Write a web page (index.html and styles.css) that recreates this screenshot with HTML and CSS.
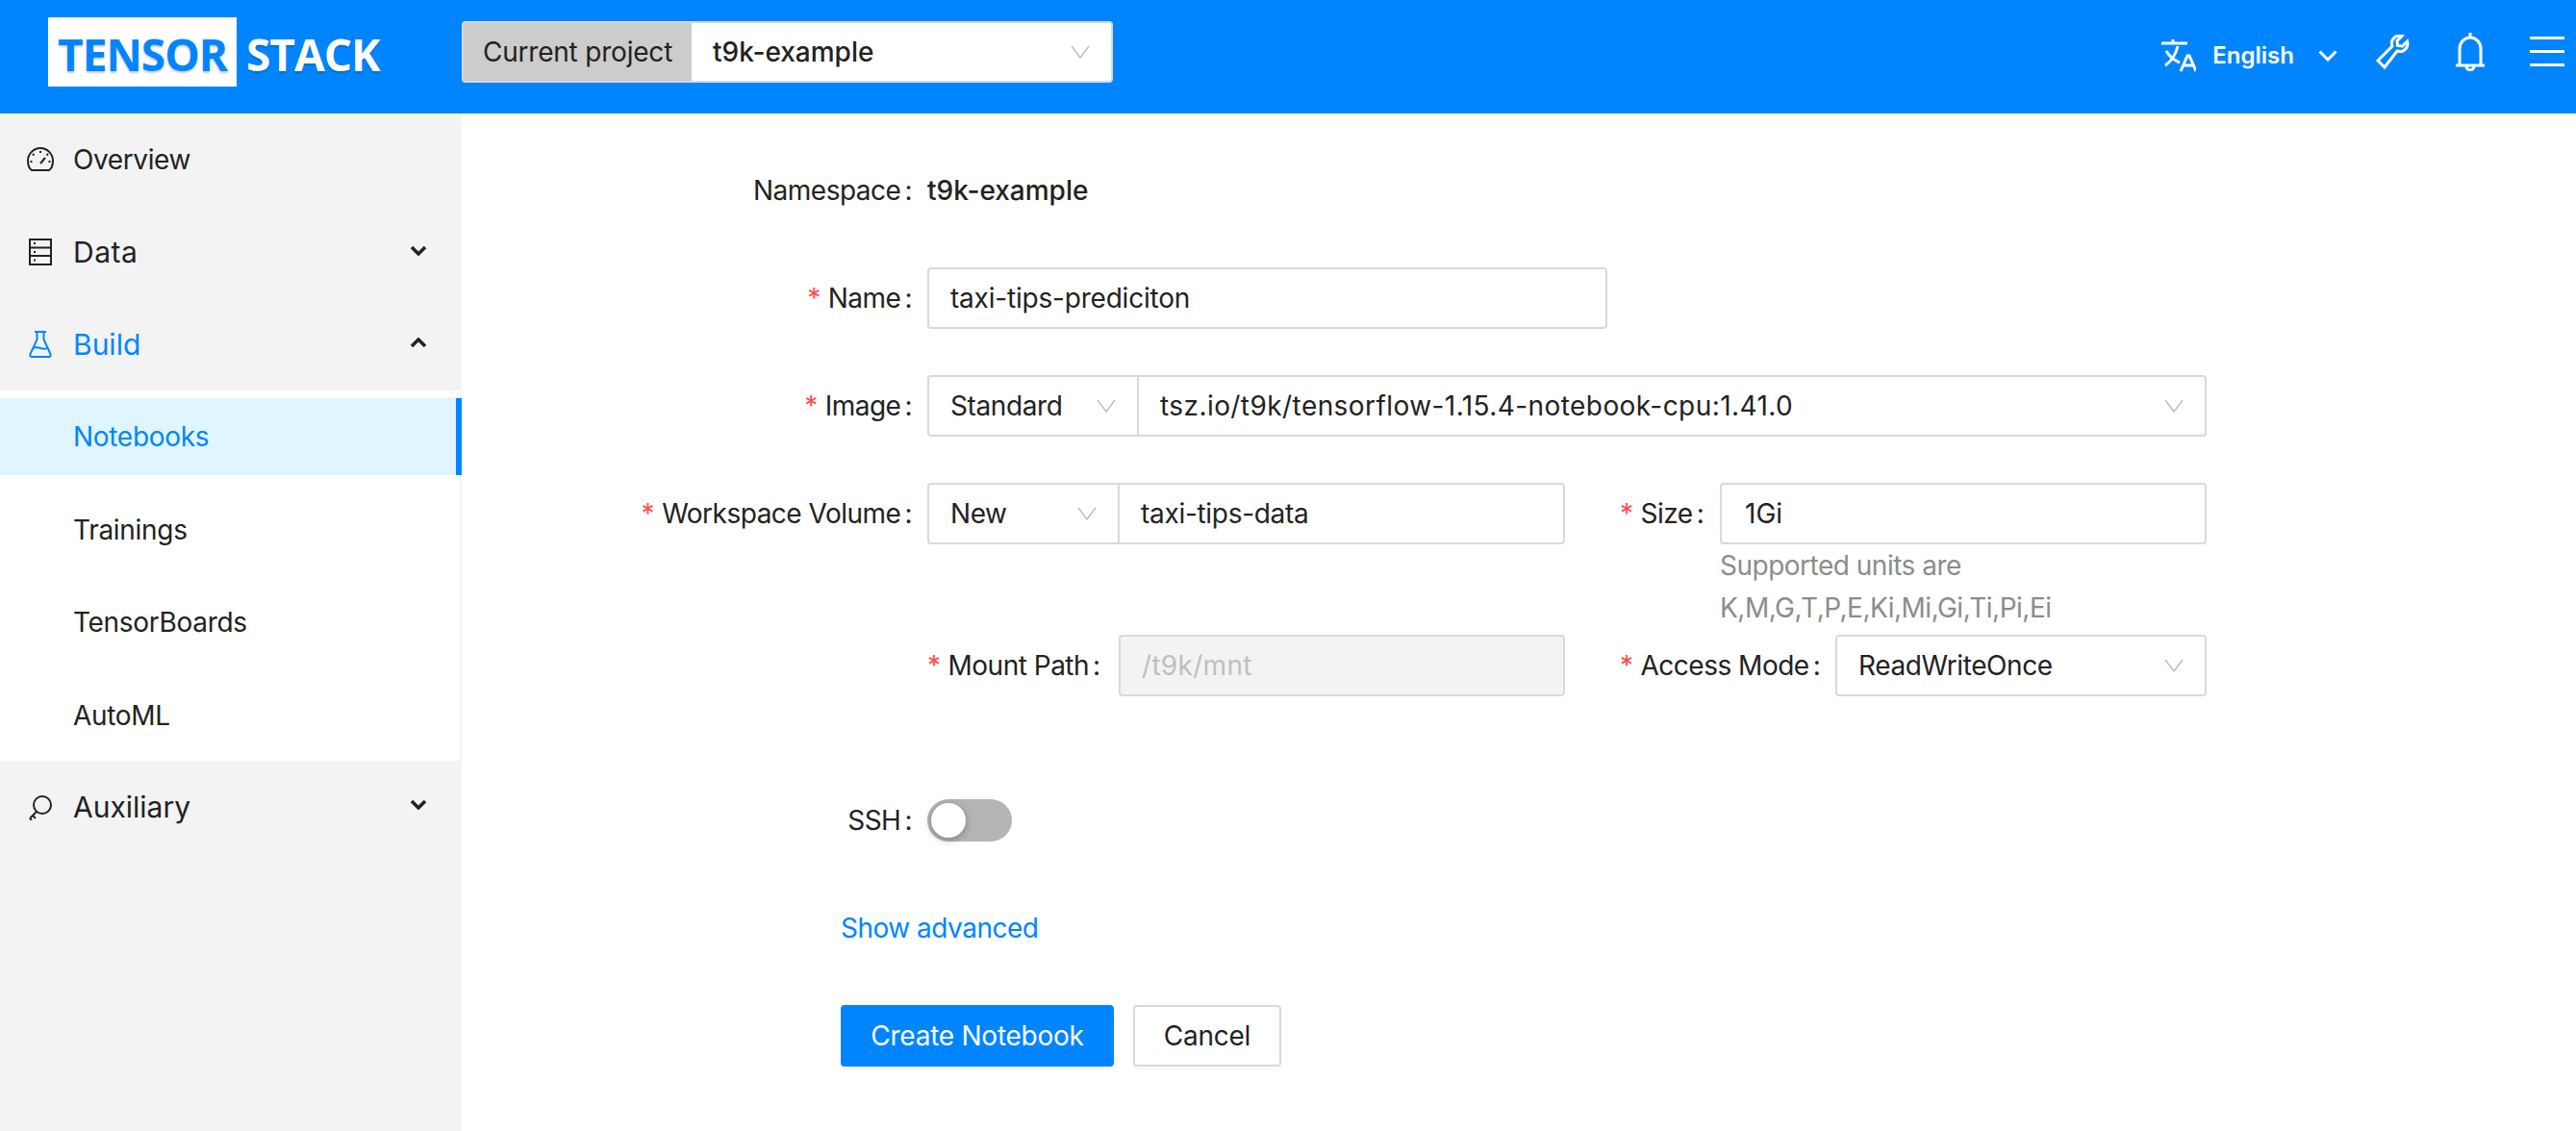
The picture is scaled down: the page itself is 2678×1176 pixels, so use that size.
FILE: index.html
```html
<!DOCTYPE html>
<html lang="en">
  <head>
    <meta charset="UTF-8">
    <meta name="viewport" content="width=device-width, initial-scale=1.0">
    <title>Create Notebook</title>
    <link rel="stylesheet" href="styles.css">
  </head>
  <body>
    <header class="header">
      <div class="logo"><span class="logo-box">TENSOR</span><span class="logo-rest">STACK</span></div>
      <div class="project">
        <span class="project-label">Current project</span>
        <span class="project-value">t9k-example<svg class="caret" viewBox="0 0 20 14"><path d="M1 1l9 12 9-12"/></svg></span>
      </div>
      <div class="header-right">
        <svg class="icon-translate" viewBox="0 0 36 34"><path d="M0 4h27M12 0v4M17 7C15 15 10 23 4 27M5 12c3 5 9 10 14 12M20 33l7-16h2l7 16M23 27h10"/></svg>
        <span class="lang">English</span>
        <svg class="icon-lang-caret" viewBox="0 0 20 12"><path d="M1.500 1.500l8.500 8.500 8.500-8.500"/></svg>
        <svg class="icon-wrench" viewBox="0 0 36 36"><path d="M2 27l15-15c-2-6 2-11 8-11l2 .5-5 5 .5 5 5 .5 5-5 .5 2c0 6-5 10-11 8L9 34z"/></svg>
        <svg class="icon-bell" viewBox="0 0 30 40"><path d="M15 0v5M4 34V17C4 10 9 5 15 5s11 5 11 12v17M0 34h30M11 35c0 5 8 5 8 0"/></svg>
        <div class="menu-lines"><i></i><i></i><i></i></div>
      </div>
    </header>
    <div class="page">
      <nav class="sidebar">
        <div class="nav-item">
          <svg class="nav-icon" viewBox="0 0 28 26"><path d="M5 24C2 22 1 18 1 14 1 7 7 1 14 1s13 6 13 13c0 4-1 8-4 10zM14 17l5-6M14 4v2M6 7l1.500 1.500M22 7l-1.500 1.500M3.500 15h2M22.500 15h2"/></svg>
          <span class="nav-text nav-overview">Overview</span>
        </div>
        <div class="nav-item nav-big">
          <svg class="nav-icon" viewBox="0 0 28 28"><path d="M3 1h22v26H3zM3 9.500h22M3 18h22M7 5h2M7 14h2M7 22.500h2"/></svg>
          <span class="nav-text nav-data">Data</span>
          <svg class="nav-caret" viewBox="0 0 18 11"><path d="M2 2l7 7 7-7"/></svg>
        </div>
        <div class="nav-item nav-big nav-open">
          <svg class="nav-icon" viewBox="0 0 28 28"><path d="M8 1h12M10.500 1v8L3.500 24c-.5 1.500 0 3 1.500 3h18c1.500 0 2-1.500 1.500-3L17.500 9V1M7 18c5-3 9 3 14 0"/></svg>
          <span class="nav-text">Build</span>
          <svg class="nav-caret" viewBox="0 0 18 11"><path d="M2 9l7-7 7 7"/></svg>
        </div>
        <div class="submenu">
          <div class="sub-item sub-active">Notebooks</div>
          <div class="sub-item">Trainings</div>
          <div class="sub-item">TensorBoards</div>
          <div class="sub-item">AutoML</div>
        </div>
        <div class="nav-item nav-big">
          <svg class="nav-icon" viewBox="0 0 28 28"><circle cx="16" cy="12" r="9"/><path d="M10 19L3 26M6 23l3 3M3 26l2 2"/></svg>
          <span class="nav-text">Auxiliary</span>
          <svg class="nav-caret" viewBox="0 0 18 11"><path d="M2 2l7 7 7-7"/></svg>
        </div>
      </nav>
      <main class="main">
        <div class="row row-namespace">
          <label class="label">Namespace<b>:</b></label>
          <span class="ns-value">t9k-example</span>
        </div>
        <div class="row">
          <label class="label"><em>*</em>Name<b>:</b></label>
          <div class="box box-name"><span class="text-name">taxi-tips-prediciton</span></div>
        </div>
        <div class="row">
          <label class="label"><em>*</em>Image<b>:</b></label>
          <div class="compact box-image">
            <div class="box select-kind"><span class="text-short">Standard</span><svg class="caret" viewBox="0 0 20 14"><path d="M1 1l9 12 9-12"/></svg></div>
            <div class="box select-image"><span class="text-image">tsz.io/t9k/tensorflow-1.15.4-notebook-cpu:1.41.0</span><svg class="caret" viewBox="0 0 20 14"><path d="M1 1l9 12 9-12"/></svg></div>
          </div>
        </div>
        <div class="row row-volume">
          <div class="col-left">
            <label class="label"><em>*</em>Workspace Volume<b>:</b></label>
            <div class="compact box-volume">
              <div class="box select-new"><span class="text-short">New</span><svg class="caret" viewBox="0 0 20 14"><path d="M1 1l9 12 9-12"/></svg></div>
              <div class="box select-volume"><span class="text-volume">taxi-tips-data</span></div>
            </div>
          </div>
          <div class="col-right">
            <label class="label-auto label-size"><em>*</em>Size<b>:</b></label>
            <div class="size-wrap">
              <div class="box box-size">1Gi</div>
              <p class="help">Supported units are K,M,G,T,P,E,Ki,Mi,Gi,Ti,Pi,Ei</p>
            </div>
          </div>
        </div>
        <div class="row row-mount">
          <div class="col-left col-mount">
            <label class="label-auto label-mount"><em>*</em>Mount Path<b>:</b></label>
            <div class="box box-mount">/t9k/mnt</div>
          </div>
          <div class="col-right">
            <label class="label-auto label-access"><em>*</em>Access Mode<b>:</b></label>
            <div class="box box-access"><span class="text-short">ReadWriteOnce</span><svg class="caret" viewBox="0 0 20 14"><path d="M1 1l9 12 9-12"/></svg></div>
          </div>
        </div>
        <div class="row row-ssh">
          <label class="label">SSH<b>:</b></label>
          <div class="switch"><span class="knob"></span></div>
        </div>
        <div class="tail">
          <a class="advanced">Show advanced</a>
          <div class="buttons">
            <button class="btn btn-primary">Create Notebook</button>
            <button class="btn btn-cancel">Cancel</button>
          </div>
        </div>
      </main>
    </div>
  </body>
</html>
```

FILE: styles.css
```css
* { box-sizing: border-box; }
html, body { margin: 0; height: 100%; }
body {
  display: flex;
  flex-direction: column;
  background-color: #fff;
  color: #222;
  font-family: Inter, "Noto Sans", sans-serif;
  font-size: 28px;
  overflow: hidden;
}
svg { fill: none; stroke: currentColor; flex: none; }

/* header */
.header {
  display: flex;
  align-items: center;
  flex: none;
  height: 118px;
  padding: 0 12px 10px 50px;
  background-color: #0085ff;
}
.logo {
  display: flex;
  align-items: center;
  width: 430px;
  font-family: "Open Sans", sans-serif;
  font-size: 46px;
  font-weight: 700;
  letter-spacing: -1px;
  text-shadow: 0 2px 2px rgba(0, 0, 0, 0.2);
}
.logo-box {
  display: block;
  width: 196px;
  height: 72px;
  margin-right: 10px;
  padding-left: 10px;
  background-color: #fff;
  color: #0085ff;
  line-height: 76px;
}
.logo-rest { padding-top: 4px; color: #fff; }
.project {
  display: flex;
  width: 677px;
  height: 64px;
  border: 2px solid #d9d9d9;
  border-radius: 4px;
  background-color: #fff;
  line-height: 60px;
}
.project-label {
  flex: none;
  width: 237px;
  background-color: #ccc;
  letter-spacing: -0.2px;
  text-align: center;
}
.project-value {
  display: flex;
  flex: 1;
  align-items: center;
  padding: 0 22px 0 22px;
  font-weight: 500;
}
.caret {
  width: 20px;
  height: 14px;
  margin-left: auto;
  color: #bfbfbf;
  stroke-width: 1.5;
}
.header-right {
  display: flex;
  align-items: center;
  margin-left: auto;
  color: #fff;
}
.header-right svg { stroke-width: 3; }
.icon-translate { width: 36px; height: 34px; margin-top: 8px; }
.lang { margin: 6px 0 0 17px; font-size: 24px; font-weight: 600; }
.icon-lang-caret { width: 20px; height: 12px; margin: 8px 0 0 25px; }
.icon-wrench { width: 36px; height: 36px; margin-left: 40px; }
.icon-bell { width: 30px; height: 40px; margin-left: 47px; }
.menu-lines {
  display: flex;
  flex-direction: column;
  gap: 11px;
  width: 36px;
  margin: -2px 0 0 47px;
}
.menu-lines i { display: block; height: 3px; background-color: #fff; }

/* sidebar */
.page { display: flex; flex: 1; min-height: 0; }
.sidebar {
  flex: none;
  width: 480px;
  background-color: #f3f3f3;
}
.nav-item {
  display: flex;
  align-items: center;
  height: 96px;
  padding: 0 36px 0 28px;
}
.nav-icon { width: 28px; height: 28px; margin-right: 20px; stroke-width: 2; }
.nav-overview { letter-spacing: -0.4px; }
.nav-big .nav-text { font-size: 30px; }
.nav-big .nav-data { letter-spacing: 0.5px; }
.nav-open { color: #0085ff; }
.nav-caret {
  width: 18px;
  height: 11px;
  margin: -4px 0 0 auto;
  color: #222;
  stroke-width: 3.5;
}
.submenu {
  margin-right: 2px;
  padding: 8px 0 7px;
  background-color: #fff;
}
.sub-item {
  height: 80px;
  margin: 0 -2px 16.500px 0;
  padding-left: 76px;
  letter-spacing: -0.3px;
  line-height: 80px;
}
.sub-item:last-child { margin-bottom: 0; }
.sub-active {
  border-right: 6px solid #0085ff;
  background-color: #dff5ff;
  color: #0085ff;
}

/* form */
.main { flex: 1; padding: 48px 0 0; }
.row { display: flex; margin-bottom: 48px; }
.row-namespace { align-items: center; height: 64px; }
.label, .label-auto {
  display: flex;
  flex: none;
  align-items: center;
  height: 64px;
  letter-spacing: -0.5px;
  white-space: nowrap;
}
.label { justify-content: flex-end; width: 484px; padding-right: 2px; }
.label b, .label-auto b { margin: 0 14px 0 4px; font-weight: 400; }
.label em, .label-auto em {
  margin-right: 8px;
  color: #ff4d4f;
  font-style: normal;
}
.label-size { width: 104px; }
.label-mount { width: 199px; }
.label-access { width: 224px; }
.ns-value { font-weight: 500; }
.box {
  display: flex;
  align-items: center;
  height: 64px;
  padding: 0 22px;
  border: 2px solid #d9d9d9;
  border-radius: 4px;
  background-color: #fff;
}
.box-name { width: 707px; }
.text-name { letter-spacing: -0.2px; }
.text-short { letter-spacing: -0.4px; }
.text-image { letter-spacing: 0.43px; }
.text-volume { letter-spacing: -0.3px; }
.compact { display: flex; }
.box-image { width: 1330px; }
.select-kind { flex: none; width: 220px; border-radius: 4px 0 0 4px; }
.select-image { flex: 1; margin-left: -2px; border-radius: 0 4px 4px 0; }
.row-volume { margin-bottom: 0; }
.col-left { display: flex; flex: none; width: 1147px; }
.col-mount { padding-left: 484px; }
.col-right { display: flex; flex: none; width: 610px; margin-left: 57px; }
.box-volume { flex: 1; }
.select-new { flex: none; width: 200px; border-radius: 4px 0 0 4px; }
.select-volume { flex: 1; margin-left: -2px; border-radius: 0 4px 4px 0; }
.size-wrap { flex: 1; }
.box-size { padding-left: 24px; }
.help {
  margin: 0;
  color: #8c8c8c;
  letter-spacing: -0.5px;
  line-height: 44px;
}
.row-mount { margin-top: 6px; margin-bottom: 107px; }
.box-mount {
  width: 464px;
  background-color: #f3f3f3;
  color: #bfbfbf;
  letter-spacing: 0.3px;
}
.box-access { flex: 1; }
.row-ssh { align-items: center; height: 44px; margin-bottom: 68px; }
.switch {
  position: relative;
  width: 88px;
  height: 44px;
  border-radius: 22px;
  background-color: #b5b5b5;
}
.knob {
  position: absolute;
  top: 4px;
  left: 4px;
  width: 36px;
  height: 36px;
  border-radius: 50%;
  background-color: #fff;
  box-shadow: 0 2px 8px rgba(0, 0, 0, 0.3);
}
.tail { padding-left: 394px; }
.advanced { display: block; color: #0085ff; letter-spacing: -0.5px; line-height: 44px; }
.buttons { display: flex; gap: 20px; margin-top: 58px; }
.btn {
  height: 64px;
  padding: 0;
  border: 2px solid #d9d9d9;
  border-radius: 4px;
  background-color: #fff;
  box-shadow: 0 4px 0 rgba(0, 0, 0, 0.02);
  color: #222;
  font: inherit;
  letter-spacing: -0.25px;
}
.btn-primary {
  width: 284px;
  border-color: #0085ff;
  background-color: #0085ff;
  color: #fff;
}
.btn-cancel { width: 154px; }
```
